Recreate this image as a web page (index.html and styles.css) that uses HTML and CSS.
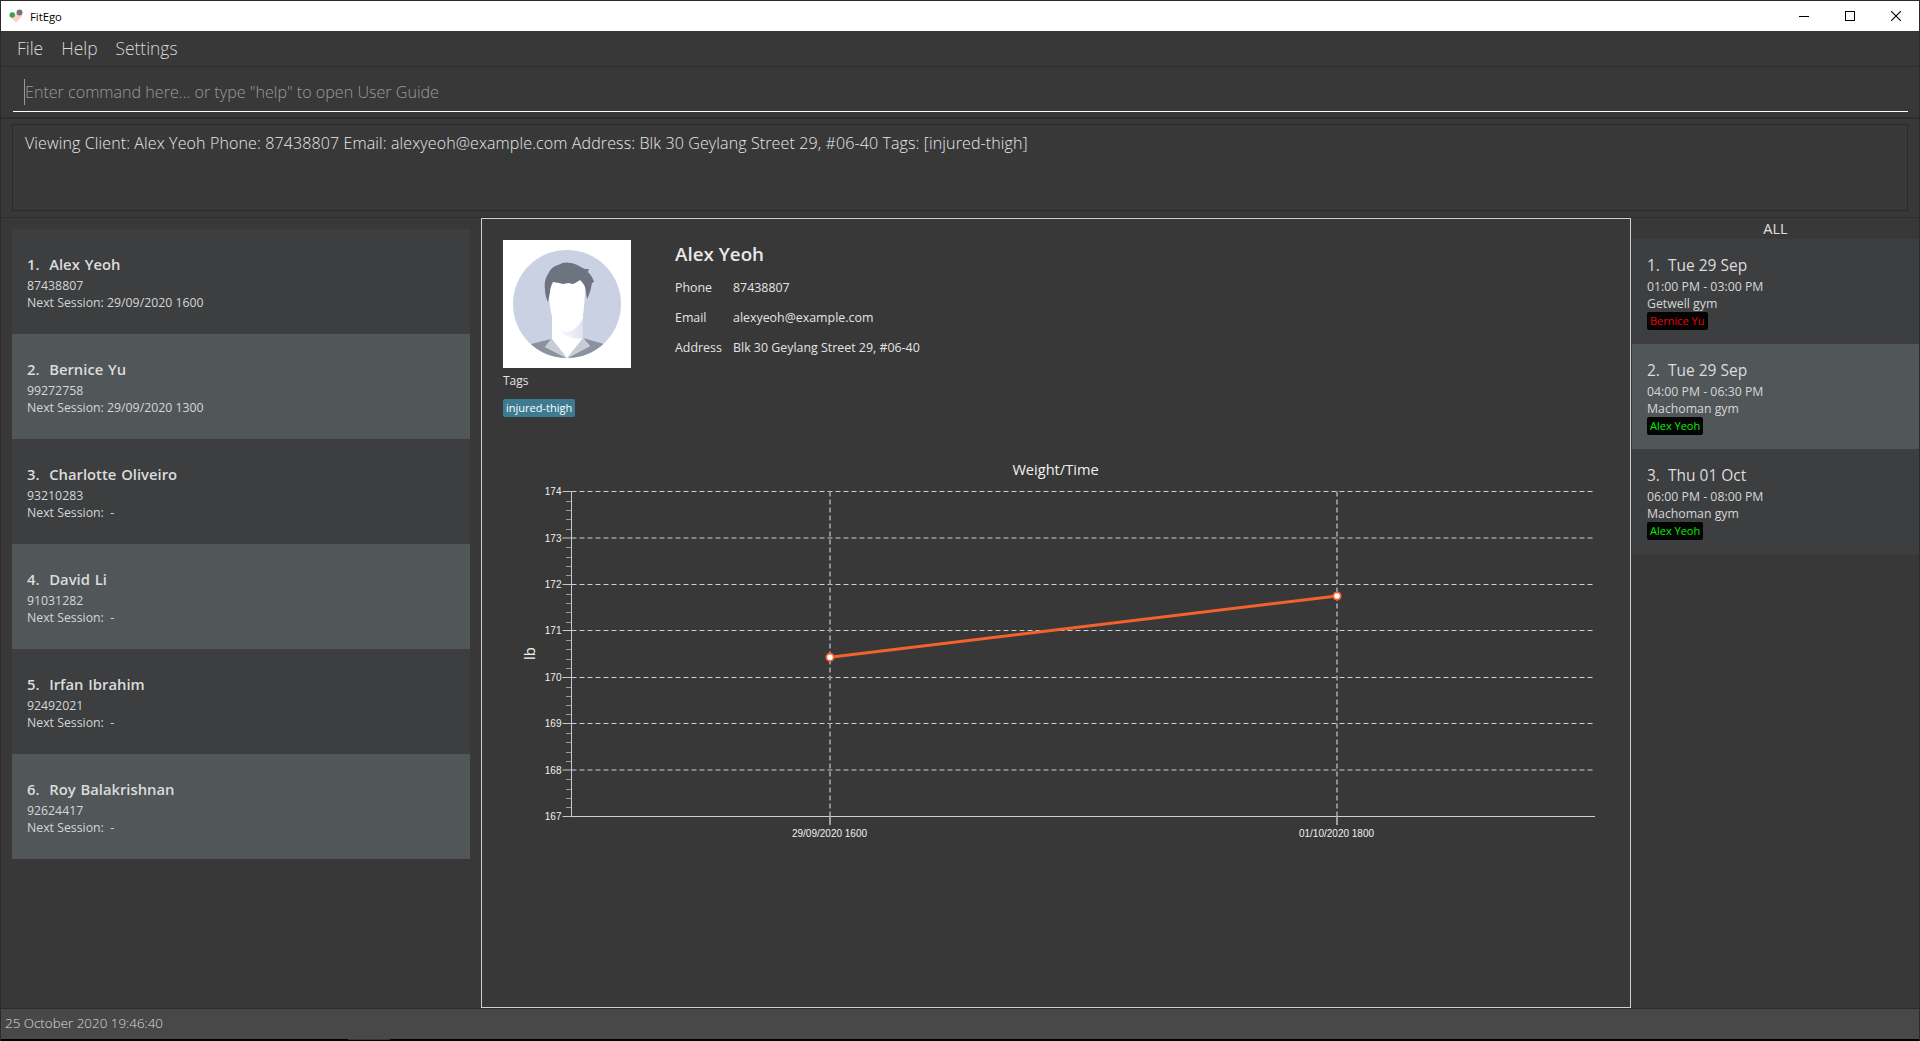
FILE: index.html
```html
<!DOCTYPE html>
<html lang="en">
<head>
    <meta charset="UTF-8">
    <title>FitEgo</title>
    <link rel="stylesheet" href="styles.css">
</head>
<body>
    <div class="window">
        <div class="title-bar">
            <svg class="app-icon" width="14" height="14" viewBox="0 0 14 14">
                <path d="M7 13.500 L1.500 8 C0 5 3 2.500 5 3.500 L7 5 L9 3.500 C11 2.500 14 5 12.500 8 Z" fill="#fcd0c2"/>
                <circle cx="3.200" cy="6" r="2.700" fill="#2fa84f"/>
                <circle cx="10.500" cy="3.500" r="3" fill="#77727c"/>
            </svg>
            <span class="app-name">FitEgo</span>
            <div class="win-controls">
                <svg width="10" height="10" viewBox="0 0 10 10"><path d="M0 5.500 H10" stroke="#000" fill="none"/></svg>
                <svg width="10" height="10" viewBox="0 0 10 10"><rect x="0.500" y="0.500" width="9" height="9" stroke="#000" fill="none"/></svg>
                <svg width="10" height="10" viewBox="0 0 10 10"><path d="M0 0 L10 10 M10 0 L0 10" stroke="#000" stroke-width="1.100" fill="none"/></svg>
            </div>
        </div>

        <div class="menu-bar">
            <span>File</span>
            <span>Help</span>
            <span>Settings</span>
        </div>

        <div class="command-pane">
            <div class="command-input">
                <span class="caret"></span>
                <span class="placeholder">Enter command here... or type "help" to open User Guide</span>
            </div>
        </div>

        <div class="result-pane">
            <div class="result-box">Viewing Client: Alex Yeoh Phone: 87438807 Email: alexyeoh@example.com Address: Blk 30 Geylang Street 29, #06-40 Tags: [injured-thigh]</div>
        </div>

        <div class="main">
            <div class="client-list">
                <div class="card">
                    <div class="card-title">1.&nbsp; Alex Yeoh</div>
                    <div class="card-line first">87438807</div>
                    <div class="card-line">Next Session: 29/09/2020 1600</div>
                </div>
                <div class="card alt">
                    <div class="card-title">2.&nbsp; Bernice Yu</div>
                    <div class="card-line first">99272758</div>
                    <div class="card-line">Next Session: 29/09/2020 1300</div>
                </div>
                <div class="card">
                    <div class="card-title">3.&nbsp; Charlotte Oliveiro</div>
                    <div class="card-line first">93210283</div>
                    <div class="card-line">Next Session: &nbsp;-</div>
                </div>
                <div class="card alt">
                    <div class="card-title">4.&nbsp; David Li</div>
                    <div class="card-line first">91031282</div>
                    <div class="card-line">Next Session: &nbsp;-</div>
                </div>
                <div class="card">
                    <div class="card-title">5.&nbsp; Irfan Ibrahim</div>
                    <div class="card-line first">92492021</div>
                    <div class="card-line">Next Session: &nbsp;-</div>
                </div>
                <div class="card alt">
                    <div class="card-title">6.&nbsp; Roy Balakrishnan</div>
                    <div class="card-line first">92624417</div>
                    <div class="card-line">Next Session: &nbsp;-</div>
                </div>
            </div>

            <div class="detail">
                <div class="profile">
                    <div class="profile-left">
                        <svg class="photo" width="128" height="128" viewBox="0 0 128 128">
                            <defs>
                                <clipPath id="disc"><circle cx="64" cy="64" r="54"/></clipPath>
                                <linearGradient id="neck" x1="0" y1="0" x2="1" y2="0">
                                    <stop offset="0" stop-color="#fff"/>
                                    <stop offset="1" stop-color="#dde2ee"/>
                                </linearGradient>
                            </defs>
                            <rect width="128" height="128" fill="#fff"/>
                            <circle cx="64" cy="64" r="54" fill="#c9d1e3"/>
                            <g clip-path="url(#disc)">
                                <path d="M49 70 V99 L64 118 L80 98 V70 Z" fill="#fff"/>
                                <path d="M54 88 C60 92 68 92 80 78 V98 C70 100 60 96 54 88 Z" fill="url(#neck)"/>
                                <path d="M20 106 L48 99 L42 107 L63 118 L40 125 Z" fill="#8c919e"/>
                                <path d="M108 106 L80 98 L87 106 L65 118 L88 125 Z" fill="#8c919e"/>
                                <path d="M48.700 98.700 L42 107 L63 117.500 Z" fill="#c8ccd5"/>
                                <path d="M80.300 98 L87 106.300 L64.700 117.500 Z" fill="#c8ccd5"/>
                            </g>
                            <path d="M46 42 C45 60 48 78 52 84 C57 90 62 92 64 92 C68 92 74 88 78 82 C81 74 82 60 82 42 C74 30 54 30 46 42 Z" fill="#fff"/>
                            <path d="M42 49 C41 42 43 37 45 34 C48 28 51 26 55 25 C60 22 64 22 68 23 C74 24 79 28 82 29 L86 29 L85 32 C88 35 90 38 91 42 L89 43 C88 48 87 54 84 59 C83 54 83 50 82 47 C81 44 79 42 77 40 C74 42 71 44 69 44 L66 43 L60 44 L56 43 L50 42 C48 46 47 49 47 52 L45 62 C43 58 42 54 42 49 Z" fill="#6e7380"/>
                        </svg>
                        <div class="tags-label">Tags</div>
                        <span class="tag">injured-thigh</span>
                    </div>
                    <div class="profile-info">
                        <div class="profile-name">Alex Yeoh</div>
                        <div class="info-row"><span class="info-key">Phone</span><span>87438807</span></div>
                        <div class="info-row"><span class="info-key">Email</span><span>alexyeoh@example.com</span></div>
                        <div class="info-row"><span class="info-key">Address</span><span>Blk 30 Geylang Street 29, #06-40</span></div>
                    </div>
                </div>

                <svg class="chart" id="chart" width="1148" height="400" viewBox="482 450 1148 400"></svg>
            </div>

            <div class="session-pane">
                <div class="session-head">ALL</div>
                <div class="card session">
                    <div class="card-title">1.&nbsp; Tue 29 Sep</div>
                    <div class="card-line first">01:00 PM - 03:00 PM</div>
                    <div class="card-line">Getwell gym</div>
                    <span class="chip red">Bernice Yu</span>
                </div>
                <div class="card session alt">
                    <div class="card-title">2.&nbsp; Tue 29 Sep</div>
                    <div class="card-line first">04:00 PM - 06:30 PM</div>
                    <div class="card-line">Machoman gym</div>
                    <span class="chip green">Alex Yeoh</span>
                </div>
                <div class="card session">
                    <div class="card-title">3.&nbsp; Thu 01 Oct</div>
                    <div class="card-line first">06:00 PM - 08:00 PM</div>
                    <div class="card-line">Machoman gym</div>
                    <span class="chip green">Alex Yeoh</span>
                </div>
            </div>
        </div>

        <div class="status-bar">25 October 2020 19:46:40</div>
        <div class="bottom-edge"><span></span></div>
    </div>

    <script src="chart.js"></script>
</body>
</html>
```

FILE: styles.css
```css
* {
    box-sizing: border-box;
}

html, body {
    margin: 0;
    height: 100%;
    overflow: hidden;
}

body {
    font-family: "Open Sans", "Noto Sans", sans-serif;
    background-color: #383838;
    color: #fff;
}

.window {
    display: flex;
    flex-direction: column;
    height: 1041px;
    border-left: 1px solid #2b2b2b;
    border-right: 1px solid #2b2b2b;
    background-color: #383838;
}

.title-bar {
    display: flex;
    align-items: center;
    height: 31px;
    padding-left: 8px;
    border-top: 1px solid #2b2b2b;
    background-color: #fff;
    color: #000;
    font-size: 11.300px;
}

.app-icon {
    margin-right: 7px;
}

.win-controls {
    display: flex;
    gap: 36px;
    margin-left: auto;
    margin-right: 18px;
}

.menu-bar {
    display: flex;
    align-items: center;
    gap: 18px;
    height: 36px;
    padding: 0 0 2px 16px;
    border-bottom: 1px solid #2d2d2d;
    font-size: 17.400px;
    font-weight: 300;
    color: #d8d8d8;
}

.command-pane {
    height: 52px;
    padding: 0 11px 0 12px;
    border-bottom: 2px solid #2d2d2d;
}

.command-input {
    display: flex;
    align-items: center;
    height: 45px;
    padding-top: 6px;
    padding-left: 11px;
    border-bottom: 1px solid #fff;
}

.caret {
    width: 1px;
    height: 26px;
    background-color: #999;
}

.placeholder {
    font-size: 16.100px;
    font-weight: 300;
    color: #9b9b9b;
}

.result-pane {
    height: 99px;
    padding: 5px 11px 6px 11px;
    border-bottom: 1px solid #2d2d2d;
}

.result-box {
    height: 87px;
    padding: 7px 12px;
    border: 1px solid #2b2b2b;
    font-size: 16px;
    letter-spacing: 0.120px;
    font-weight: 300;
    color: #e8e8e8;
}

.main {
    display: flex;
    flex: 1;
    min-height: 0;
}

.client-list {
    width: 480px;
    padding: 11px 11px 0 11px;
}

.card {
    height: 105px;
    padding: 25px 0 0 15px;
    background-color: #3c3e3f;
}

.card.alt {
    background-color: #515658;
}

.card-title {
    font-size: 14.800px;
    line-height: 20px;
    font-weight: 600;
    word-spacing: 1px;
    color: #dcdcdc;
}

.card-line {
    font-size: 12.300px;
    line-height: 17px;
    color: #d6d6d6;
}

.card-line.first {
    margin-top: 3px;
}

.detail {
    width: 1150px;
    border: 1px solid #d0d0d0;
    padding: 21px 0 0 0;
}

.profile {
    display: flex;
    height: 210px;
    padding-left: 21px;
}

.profile-left {
    width: 172px;
}

.photo {
    display: block;
}

.tags-label {
    margin-top: 3px;
    font-size: 12px;
    line-height: 20px;
    color: #e4e4e4;
}

.tag {
    display: inline-block;
    margin-top: 8px;
    padding: 0 3px;
    height: 18px;
    line-height: 18px;
    border-radius: 2px;
    background-color: #3e7b91;
    font-size: 11px;
    color: #fff;
}

.profile-info {
    font-size: 12.400px;
    color: #e4e4e4;
}

.profile-name {
    height: 38px;
    padding-top: 2px;
    font-size: 18.800px;
    font-weight: 600;
    line-height: 24px;
    color: #e8e8e8;
}

.info-row {
    display: flex;
    height: 30px;
    line-height: 20px;
}

.info-key {
    width: 58px;
}

.chart {
    display: block;
    font-family: "Liberation Sans", Arial, sans-serif;
}

.chart-title {
    font-family: "Open Sans", "Noto Sans", sans-serif;
}

.session-pane {
    flex: 1;
    padding-left: 1px;
}

.session-head {
    height: 21px;
    line-height: 21px;
    text-align: center;
    font-size: 14.500px;
    color: #e0e0e0;
}

.card.session {
    padding-top: 16px;
}

.card.session .card-title {
    font-weight: 400;
    font-size: 15.500px;
    word-spacing: 0;
}

.chip {
    display: block;
    width: fit-content;
    height: 18px;
    line-height: 18px;
    padding: 0 3px;
    border-radius: 2px;
    background-color: #040404;
    font-size: 11px;
}

.chip.red {
    color: #f00000;
}

.chip.green {
    color: #00f000;
}

.status-bar {
    height: 31px;
    padding-left: 4px;
    line-height: 29px;
    background-color: #484848;
    border-top: 1px solid #2d2d2d;
    font-size: 13.400px;
    font-weight: 300;
    color: #dcdcdc;
}

.bottom-edge {
    height: 2px;
    background-color: #000;
}

.bottom-edge span {
    display: block;
    width: 42px;
    height: 1px;
    margin-left: 347px;
    background-color: #333;
}
```

FILE: chart.js
```js
// weight chart, drawn in window coordinates so the numbers read off the screenshot
const chart = document.getElementById('chart');
const NS = 'http://www.w3.org/2000/svg';

const plotLeft = 571.5, plotRight = 1595, plotTop = 491.5, plotBottom = 816.5;
const rowHeight = (plotBottom - plotTop) / 7;
// two of the rows sit between pixels in the original, so they come out thicker and dimmer
const rows = [491.5, 538, 584.5, 630.5, 677.5, 723.5, 770, 816.5];
const points = [[830, 657.3], [1337, 596]];

function add(name, attrs, text) {
    const el = document.createElementNS(NS, name);
    for (const key in attrs) el.setAttribute(key, attrs[key]);
    if (text) el.textContent = text;
    chart.appendChild(el);
    return el;
}

function line(x1, y1, x2, y2, stroke, width, dash) {
    const attrs = { x1, y1, x2, y2, stroke, 'stroke-width': width };
    if (dash) attrs['stroke-dasharray'] = dash;
    add('line', attrs);
}

add('text', { class: 'chart-title', x: 1055.5, y: 475, 'text-anchor': 'middle', fill: '#f0f0f0', 'font-size': 14.6 }, 'Weight/Time');

rows.slice(0, 7).forEach(y => line(plotLeft, y, plotRight, y, '#d0d0d0', 1, '5 3'));

points.forEach(p => line(p[0], plotTop, p[0], plotBottom, '#8e8e8e', 2, '5 3'));

// y axis
rows.forEach((y, i) => {
    line(562.5, y, plotLeft, y, '#c8c8c8', 1);
    add('text', { x: 561.5, y: y + 3.5, 'text-anchor': 'end', fill: '#f0f0f0', 'font-size': 10 }, String(174 - i));
    if (i < 7) {
        for (let j = 1; j < 5; j++) {
            const my = Math.round(plotTop + rowHeight * i + rowHeight * j / 5) + 0.5;
            line(566, my, plotLeft, my, '#9a9a9a', 1);
        }
    }
});
line(plotLeft, plotTop, plotLeft, plotBottom, '#c8c8c8', 1);
line(plotLeft, plotBottom, plotRight, plotBottom, '#d0d0d0', 1);

add('text', { class: 'chart-title', x: 0, y: 0, transform: 'translate(535 660) rotate(-90)', fill: '#f0f0f0', 'font-size': 15 }, 'lb');

// x axis
const labels = ['29/09/2020 1600', '01/10/2020 1800'];
points.forEach((p, i) => {
    line(p[0], plotBottom, p[0], 825, '#a0a0a0', 2);
    add('text', { x: p[0] - 0.5, y: 837, 'text-anchor': 'middle', fill: '#f0f0f0', 'font-size': 10 }, labels[i]);
});

// series
line(points[0][0], points[0][1], points[1][0], points[1][1], '#f3622d', 3);
points.forEach(p => add('circle', { cx: p[0], cy: p[1], r: 3.7, fill: '#fff', stroke: '#f3622d', 'stroke-width': 1.8 }));
```
